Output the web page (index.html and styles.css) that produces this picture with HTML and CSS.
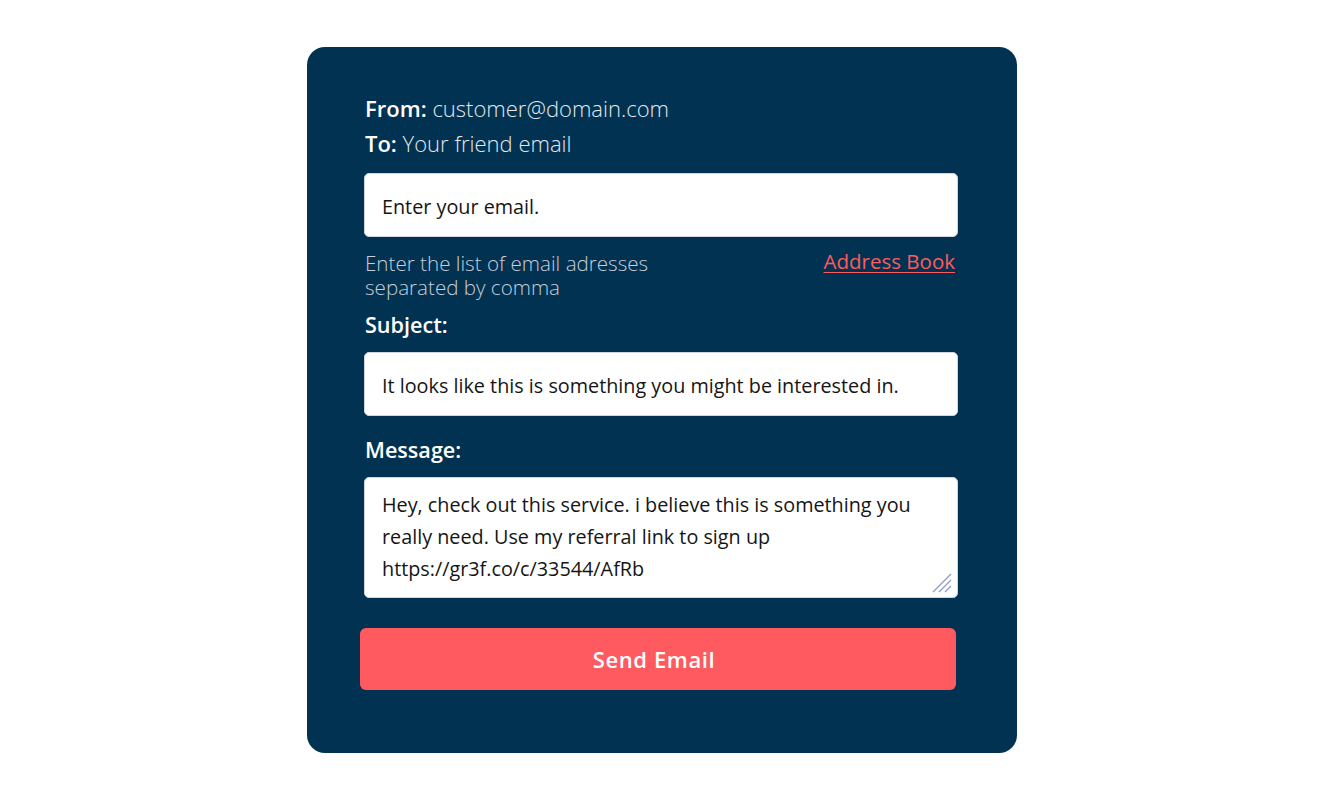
FILE: index.html
```html
<!DOCTYPE html>
<html lang="en">
<head>
<meta charset="utf-8">
<title>Send Email</title>
<link rel="stylesheet" href="styles.css">
</head>
<body>
<div class="card">
  <div class="meta"><span class="lbl">From:</span> customer@domain.com</div>
  <div class="meta"><span class="lbl">To:</span> Your friend email</div>
  <input class="field first" type="text" value="Enter your email.">
  <div class="helper">
    <div class="hint"><div class="hl">Enter the list of email adresses</div><div class="hl">separated by comma</div></div>
    <a class="book" href="#">Address Book</a>
  </div>
  <div class="label sub">Subject:</div>
  <input class="field" type="text" value="It looks like this is something you might be interested in.">
  <div class="label msg">Message:</div>
  <div class="tawrap">
    <textarea class="area">Hey, check out this service. i believe this is something you really need. Use my referral link to sign up https://gr3f.co/c/33544/AfRb</textarea>
    <svg class="grip" width="22" height="22" viewBox="0 0 22 22"><path d="M2 20 L20 2 M8 20 L20 8 M14 20 L20 14" stroke="#8b9dcc" stroke-width="1.3" fill="none"/></svg>
  </div>
  <button class="send">Send Email</button>
</div>
</body>
</html>
```
FILE: styles.css
```css
html, body {
  margin: 0;
  padding: 0;
  background: #ffffff;
}
body {
  font-family: "Open Sans", "Liberation Sans", sans-serif;
  padding-top: 47px;
}
.card {
  box-sizing: border-box;
  width: 710px;
  height: 706px;
  margin: 0 auto;
  background: #013251;
  border-radius: 18px;
  padding: 44px 57px 0 58px;
  display: flex;
  flex-direction: column;
  color: #ffffff;
}
.meta {
  font-size: 22px;
  line-height: 35px;
  font-weight: 300;
  color: #e3e7ee;
}
.lbl {
  font-weight: 600;
  color: #ffffff;
}
.field {
  box-sizing: border-box;
  width: 594px;
  height: 64px;
  margin-left: -1px;
  border: 1px solid #cfd6e2;
  border-radius: 5px;
  background: #fff;
  padding: 3px 17px 0 17px;
  font-family: "Open Sans", "Liberation Sans", sans-serif;
  font-size: 19.8px;
  color: #151515;
  outline: none;
}
.field.first {
  margin-top: 12px;
}
.helper {
  margin-top: 14px;
  display: flex;
  justify-content: space-between;
  align-items: flex-start;
  padding-right: 5px;
}
.hint {
  font-size: 20.6px;
  font-weight: 300;
  color: #c8cdd8;
  margin-bottom: 1px;
}
.hl {
  height: 24px;
  line-height: 24px;
}
.book {
  font-size: 20.5px;
  line-height: 24px;
  margin-top: -2px;
  color: #ff5a5f;
  text-decoration: underline;
  text-underline-offset: 3px;
  text-decoration-thickness: 1px;
}
.label {
  font-size: 21.6px;
  line-height: 26px;
  font-weight: 600;
  color: #ffffff;
  margin-bottom: 14px;
}
.label.sub {
  margin-top: 12px;
}
.label.msg {
  margin-top: 21px;
}
.tawrap {
  position: relative;
  width: 594px;
  margin-left: -1px;
  height: 121px;
}
.area {
  box-sizing: border-box;
  display: block;
  width: 594px;
  height: 121px;
  border: 1px solid #cfd6e2;
  border-radius: 5px;
  background: #fff;
  padding: 11px 20px 0 17px;
  font-family: "Open Sans", "Liberation Sans", sans-serif;
  font-size: 19.8px;
  line-height: 32px;
  color: #151515;
  resize: none;
  outline: none;
  overflow: hidden;
}
.grip {
  position: absolute;
  right: 5px;
  bottom: 4px;
}
.send {
  margin-top: 30px;
  margin-left: -5px;
  width: 596px;
  height: 62px;
  border: none;
  border-radius: 6px;
  background: #ff5a5f;
  color: #ffffff;
  font-family: "Open Sans", "Liberation Sans", sans-serif;
  font-size: 22px;
  font-weight: 600;
  letter-spacing: 0.6px;
  padding: 0 8px 0 0;
  cursor: pointer;
}
```
